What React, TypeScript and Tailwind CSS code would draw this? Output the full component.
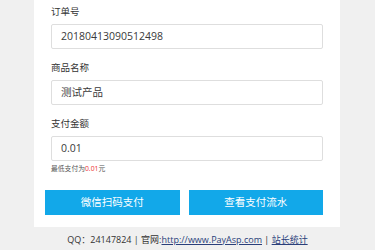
import React from "react";

const font = { fontFamily: '"Open Sans", "Noto Sans CJK SC", sans-serif' };

function Field({ label, value }: { label: string; value: string }) {
  return (
    <div className="flex flex-col">
      <div className="h-[14px] leading-[14px] text-[9.5px] text-[#333] mb-[5px]">{label}</div>
      <div className="h-[25px] border border-[#dedede] rounded-[2px] bg-white flex items-center pl-[9px] text-[10.5px] text-[#3a3a3a]">
        {value}
      </div>
    </div>
  );
}

export default function App() {
  return (
    <div className="w-[375px] h-[250px] bg-[#f0f0f0] overflow-hidden" style={font}>
      <div className="ml-[34px] w-[306px] bg-white pt-[5px] pb-[12px]">
        <div className="px-[17px] flex flex-col gap-[12px]">
          <Field label="订单号" value="20180413090512498" />
          <Field label="商品名称" value="测试产品" />
          <Field label="支付金额" value="0.01" />
        </div>
        <div className="px-[17px] mt-[3px] h-[10px] leading-[10px] text-[6.8px] text-[#555]">
          最低支付为<span className="text-[#e33]">0.01</span>元
        </div>
        <div className="mt-[16px] pl-[11px] pr-[17px] grid grid-cols-2 gap-[9px]">
          <button className="h-[25px] bg-[#12a8e9] text-white text-[10.5px]">微信扫码支付</button>
          <button className="h-[25px] bg-[#12a8e9] text-white text-[10.5px]">查看支付流水</button>
        </div>
      </div>
      <div className="mt-[6px] h-[14px] leading-[14px] text-center text-[9px] text-[#333]">
        QQ：24147824 | 官网:<span className="underline text-[#2a3f7a]">http://www.PayAsp.com</span> | <span className="underline text-[#2a3f7a]">站长统计</span>
      </div>
    </div>
  );
}
